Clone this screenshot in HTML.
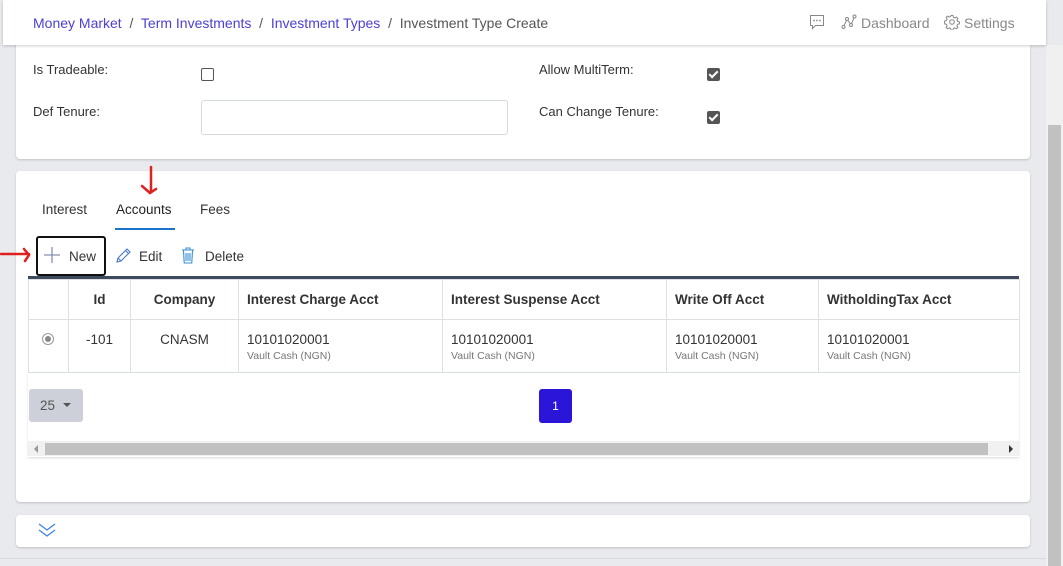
<!DOCTYPE html>
<html><head><style>
body{margin:0;width:1063px;height:566px;background:#e9eaee;font-family:"Liberation Sans",sans-serif;position:relative;overflow:hidden;color:#333}
.abs{position:absolute}
.hdr{left:3px;top:0;width:1043px;height:45px;background:#fff;box-shadow:0 1px 3px rgba(0,0,0,.2);z-index:2}
.card{background:#fff;border-radius:4px;box-shadow:0 1px 2px rgba(0,0,0,.18)}
.lbl{font-size:13px;color:#333}
.cb{width:11px;height:11px;border:1px solid #555;border-radius:2px;background:#fff}
.cb.on{background:#555;border-color:#555}
.cb.on::after{content:"";position:absolute;left:3px;top:0px;width:3px;height:7px;border:solid #fff;border-width:0 2px 2px 0;transform:rotate(45deg)}
table{border-collapse:collapse;font-size:13.5px;table-layout:fixed}
td,th{border:1px solid #dde0e4;padding:0 0 0 8px;text-align:left;overflow:hidden;white-space:nowrap}
th{font-weight:bold;height:39px;color:#333}
td{height:53px;vertical-align:top;padding-top:12px;box-sizing:border-box}
.sub{font-size:10.5px;color:#777;margin-top:3px}
</style></head><body>
<div class="abs hdr"></div>
<div class="abs" style="left:33px;top:15px;font-size:14px;color:#555;z-index:3"><span style="color:#4b3fd6">Money Market</span> &nbsp;/&nbsp; <span style="color:#4b3fd6">Term Investments</span> &nbsp;/&nbsp; <span style="color:#4b3fd6">Investment Types</span> &nbsp;/&nbsp; Investment Type Create</div>
<svg class="abs" style="left:809px;top:14px;z-index:3" width="16" height="16" viewBox="0 0 16 16" fill="none" stroke="#888" stroke-width="1"><path d="M1.5 1.5h13v10h-8l-3 3v-3h-2z"/><circle cx="5" cy="6.5" r=".4"/><circle cx="8" cy="6.5" r=".4"/><circle cx="11" cy="6.5" r=".4"/></svg>
<svg class="abs" style="left:841px;top:14px;z-index:3" width="16" height="16" viewBox="0 0 16 16" fill="none" stroke="#888" stroke-width="1"><circle cx="2.5" cy="13" r="1.5"/><circle cx="6" cy="5" r="1.5"/><circle cx="10" cy="11" r="1.5"/><circle cx="13.5" cy="2.5" r="1.5"/><path d="M3 11.6L5.5 6.4M6.7 6.3L9.4 9.7M10.5 9.6L13 4"/></svg>
<div class="abs" style="left:861px;top:15px;font-size:14px;color:#888;z-index:3">Dashboard</div>
<svg class="abs" style="left:944px;top:14px;z-index:3" width="16" height="16" viewBox="0 0 16 16" fill="none" stroke="#888" stroke-width="1"><circle cx="8" cy="8" r="2.3"/><path d="M7 1.5h2l.4 1.8 1.5.7 1.6-1 1.4 1.4-1 1.6.7 1.5 1.8.4v2l-1.8.4-.7 1.5 1 1.6-1.4 1.4-1.6-1-1.5.7-.4 1.8H7l-.4-1.8-1.5-.7-1.6 1-1.4-1.4 1-1.6-.7-1.5-1.8-.4V7l1.8-.4.7-1.5-1-1.6 1.4-1.4 1.6 1 1.5-.7z"/></svg>
<div class="abs" style="left:964px;top:15px;font-size:14px;color:#888;z-index:3">Settings</div>
<div class="abs" style="left:1046px;top:45px;width:17px;height:521px;background:#f0f0f0"></div>
<div class="abs" style="left:1048px;top:125px;width:13px;height:441px;background:#c1c1c1"></div>

<div class="abs card" style="left:16px;top:40px;width:1014px;height:119px"></div>
<div class="abs lbl" style="left:33px;top:62px">Is Tradeable:</div>
<div class="abs cb" style="left:201px;top:68px"></div>
<div class="abs lbl" style="left:33px;top:104px">Def Tenure:</div>
<div class="abs" style="left:201px;top:100px;width:305px;height:33px;border:1px solid #d5d8dd;border-radius:3px"></div>
<div class="abs lbl" style="left:539px;top:62px">Allow MultiTerm:</div>
<div class="abs cb on" style="left:707px;top:68px"></div>
<div class="abs lbl" style="left:539px;top:104px">Can Change Tenure:</div>
<div class="abs cb on" style="left:707px;top:111px"></div>

<div class="abs card" style="left:16px;top:171px;width:1014px;height:331px"></div>
<div class="abs" style="left:42px;top:202px;font-size:13.5px">Interest</div>
<div class="abs" style="left:116px;top:202px;font-size:13.5px;color:#222">Accounts</div>
<div class="abs" style="left:115px;top:228px;width:60px;height:2px;background:#1a73c9"></div>
<div class="abs" style="left:200px;top:202px;font-size:13.5px">Fees</div>
<svg class="abs" style="left:137px;top:164px" width="26" height="32" viewBox="0 0 26 32" fill="none" stroke="#e0201c" stroke-width="2.5" stroke-linecap="round"><path d="M14 3v24M5 22l8 7 6-4"/></svg>
<svg class="abs" style="left:0px;top:247px" width="34" height="16" viewBox="0 0 34 16" fill="none" stroke="#e0201c" stroke-width="2.5" stroke-linecap="round"><path d="M1 7h28M24 2l5 6-4 6"/></svg>
<div class="abs" style="left:36px;top:236px;width:66px;height:36px;border:2px solid #111;border-radius:3px"></div>
<svg class="abs" style="left:44px;top:247px" width="16" height="16"><path d="M8 0v16M0 8h16" stroke="#8a8fb0" stroke-width="1.3"/></svg>
<div class="abs" style="left:69px;top:249px;font-size:13.5px">New</div>
<svg class="abs" style="left:115px;top:247px" width="17" height="17" viewBox="0 0 17 17" fill="none" stroke="#4a78c6" stroke-width="1.1"><path d="M2 15l1-4L12 2l3 3-9 9zM10.5 3.5l3 3M3 11l3 3"/></svg>
<div class="abs" style="left:139px;top:249px;font-size:13.5px">Edit</div>
<svg class="abs" style="left:181px;top:247px" width="14" height="17" viewBox="0 0 14 17" fill="none" stroke="#3a8fd6" stroke-width="1.1"><path d="M1 3h12M5 3V1h4v2M2.5 3.5l.7 12.5h7.6l.7-12.5M5 6v8M7 6v8M9 6v8"/></svg>
<div class="abs" style="left:205px;top:249px;font-size:13.5px">Delete</div>

<div class="abs" style="left:28px;top:276px;width:991px;height:3px;background:#3e4a5e"></div>
<table class="abs" style="left:28px;top:279px;width:991px">
<colgroup><col style="width:40px"><col style="width:62px"><col style="width:108px"><col style="width:204px"><col style="width:224px"><col style="width:152px"><col style="width:201px"></colgroup>
<tr><th></th><th style="text-align:center;padding:0">Id</th><th style="text-align:center;padding:0">Company</th><th>Interest Charge Acct</th><th>Interest Suspense Acct</th><th>Write Off Acct</th><th>WitholdingTax Acct</th></tr>
<tr><td style="padding:12px 0 0 13px"><div style="width:10px;height:10px;border:1px solid #999;border-radius:50%;position:relative;margin-top:1px;box-sizing:border-box;width:12px;height:12px"><div style="position:absolute;left:2px;top:2px;width:6px;height:6px;border-radius:50%;background:#888"></div></div></td><td style="text-align:center;padding-left:0">-101</td><td style="text-align:center;padding-left:0">CNASM</td><td>10101020001<div class="sub">Vault Cash (NGN)</div></td><td>10101020001<div class="sub">Vault Cash (NGN)</div></td><td>10101020001<div class="sub">Vault Cash (NGN)</div></td><td>10101020001<div class="sub">Vault Cash (NGN)</div></td></tr>
</table>
<div class="abs" style="left:28px;top:373px;width:991px;height:84px;box-shadow:0 1px 2px rgba(0,0,0,.15)"></div>
<div class="abs" style="left:29px;top:389px;width:54px;height:33px;background:#cdd0d8;border-radius:3px;font-size:13.5px;color:#555"><span style="position:absolute;left:11px;top:9px">25</span><span style="position:absolute;left:34px;top:14px;border:4px solid transparent;border-top:4px solid #555"></span></div>
<div class="abs" style="left:539px;top:389px;width:33px;height:34px;background:#2b15d8;border-radius:3px;color:#fff;font-size:12px;text-align:center;line-height:34px">1</div>
<div class="abs" style="left:28px;top:441px;width:991px;height:15px;background:#f1f1f1"></div>
<div class="abs" style="left:45px;top:443px;width:943px;height:12px;background:#c1c1c1"></div>
<div class="abs" style="left:34px;top:445px;border:4px solid transparent;border-right:4px solid #999;border-left:0"></div>
<div class="abs" style="left:1009px;top:445px;border:4px solid transparent;border-left:4px solid #333;border-right:0"></div>

<div class="abs card" style="left:16px;top:515px;width:1014px;height:32px"></div>
<svg class="abs" style="left:38px;top:522px" width="18" height="16" viewBox="0 0 18 16" fill="none" stroke="#3a7fe0" stroke-width="1.2"><path d="M1 2l8 6 8-6M1 8l8 6 8-6"/></svg>
<div class="abs" style="left:0;top:558px;width:1046px;height:1px;background:#d8d9dd"></div>
</body></html>
